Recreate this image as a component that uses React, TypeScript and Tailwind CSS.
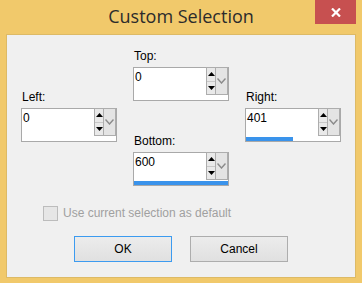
const FIELDS = {
  top: { label: 'Top:', value: 0, max: 600 },
  left: { label: 'Left:', value: 0, max: 800 },
  right: { label: 'Right:', value: 401, max: 800 },
  bottom: { label: 'Bottom:', value: 600, max: 600 },
};

function Spinner() {
  return (
    <div className="w-[10px] flex flex-col border border-[#ADADAD] -mt-[1px] h-[28px]">
      <div className="flex-1 bg-[#E9E9E9] flex items-center justify-center border-b border-[#C8C8C8]">
        <svg width="7" height="4" viewBox="0 0 7 4">
          <path d="M0 4 L3.5 0 L7 4 Z" fill="#000" />
        </svg>
      </div>
      <div className="flex-1 bg-[#E9E9E9] flex items-center justify-center">
        <svg width="7" height="4" viewBox="0 0 7 4">
          <path d="M0 0 L7 0 L3.5 4 Z" fill="#000" />
        </svg>
      </div>
    </div>
  );
}

function Field({ label, value, max }: { label: string; value: number; max: number }) {
  const pct = Math.min(100, (value / max) * 100);
  return (
    <div className="w-[96px]">
      <div className="h-[14px] leading-[14px] pl-[1px] mb-[4px] text-[12px] text-black">{label}</div>
      <div className="h-[34px] border border-[#A9A9A9] bg-white flex flex-col">
        <div className="flex h-[27px]">
          <div className="flex-1 pl-[1px] pt-[2px] text-[12px] leading-[14px] text-black">{value}</div>
          <Spinner />
          <div className="w-[12px] h-[28px] -mt-[1px] border border-[#ADADAD] border-l-0 bg-[#E4E4E4] flex items-center justify-center">
            <svg width="9" height="6" viewBox="0 0 9 6">
              <path d="M0.5 0.5 L4.5 5 L8.5 0.5" fill="none" stroke="#8A8A8A" strokeWidth="1.4" />
            </svg>
          </div>
        </div>
        <div className="mt-auto h-[4px]">
          <div className="h-full bg-[#3A93EB]" style={{ width: `${pct}%` }} />
        </div>
      </div>
    </div>
  );
}

export default function App() {
  return (
    <div className="w-[362px] h-[283px] bg-[#F1C96B] flex flex-col font-['Liberation_Sans',Arial,sans-serif]">
      {/* barre de titre */}
      <div className="relative h-[35px] flex items-start justify-center">
        <span className="mt-[4px] text-[18px] leading-[24px] text-[#2B2B2B] font-['Open_Sans',sans-serif]">
          Custom Selection
        </span>
        <div className="absolute right-[6px] top-0 w-[41px] h-[24px] bg-[#C75050] flex items-center justify-center">
          <svg width="10" height="9" viewBox="0 0 10 9">
            <path d="M1 0.5 L9 8.5 M9 0.5 L1 8.5" stroke="#fff" strokeWidth="2.2" />
          </svg>
        </div>
      </div>

      {/* zone client */}
      <div className="mx-[7px] h-[242px] bg-[#F0F0F0] shadow-[0_0_0_1px_#DDBA66] flex flex-col">
        <div className="flex gap-[16px] pl-[14px]">
          <div className="pt-[55px]">
            <Field {...FIELDS.left} />
          </div>
          <div className="pt-[14px] flex flex-col gap-[33px]">
            <Field {...FIELDS.top} />
            <Field {...FIELDS.bottom} />
          </div>
          <div className="pt-[55px]">
            <Field {...FIELDS.right} />
          </div>
        </div>

        <div className="mt-[20px] pl-[36px] flex items-center gap-[5px]">
          <span className="w-[15px] h-[15px] border border-[#BCBCBC] bg-[#E6E6E6]" />
          <span className="text-[12px] leading-[15px] text-[#A0A0A0]">Use current selection as default</span>
        </div>

        <div className="mt-[15px] pl-[67px] flex gap-[18px]">
          <button className="w-[98px] h-[26px] border border-[#3C9BF0] bg-gradient-to-b from-[#ECECEC] to-[#E0E0E0] text-[12px] text-black">
            OK
          </button>
          <button className="w-[98px] h-[26px] border border-[#ADADAD] bg-gradient-to-b from-[#ECECEC] to-[#E0E0E0] text-[12px] text-black">
            Cancel
          </button>
        </div>
      </div>
    </div>
  );
}
